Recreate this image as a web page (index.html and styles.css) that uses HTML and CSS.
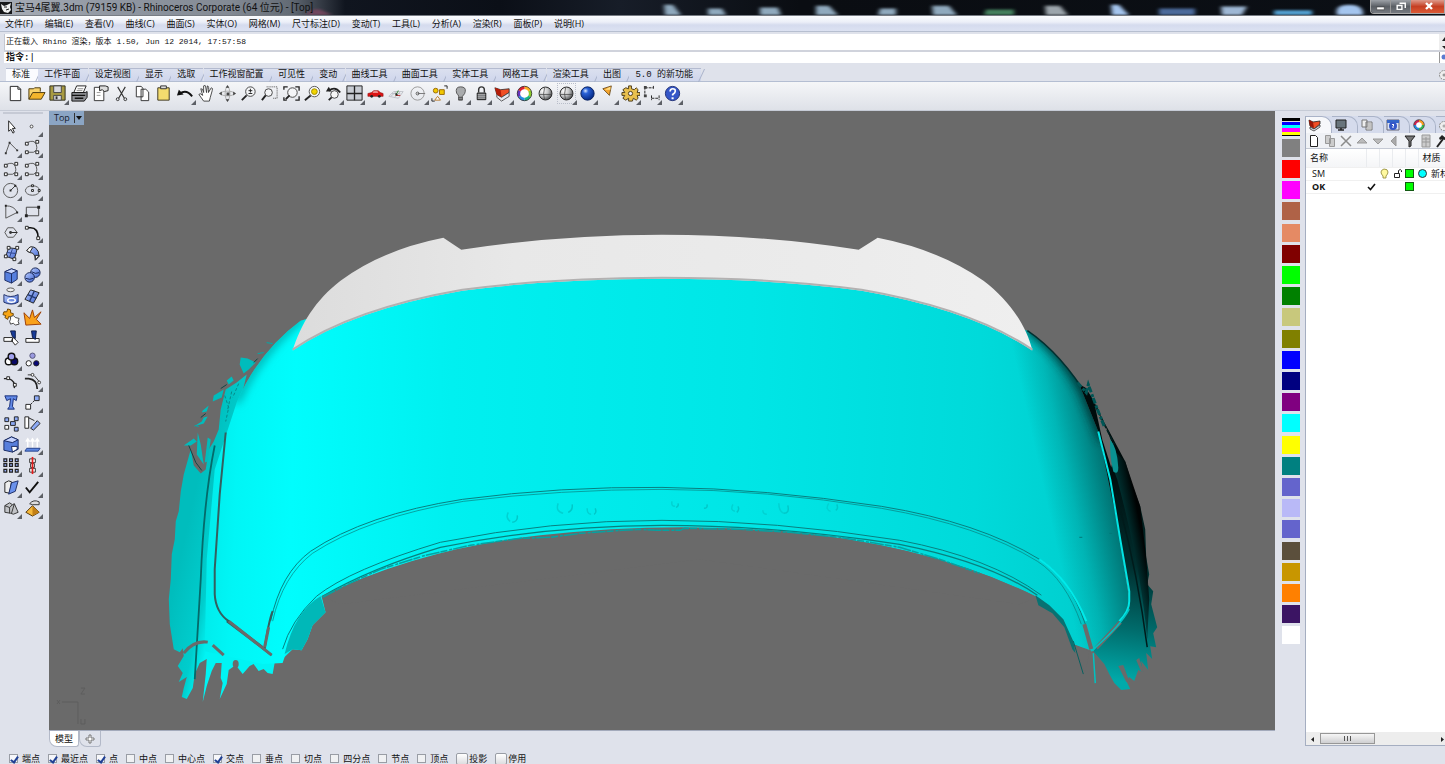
FILE: index.html
```html
<!DOCTYPE html>
<html>
   <head>
      <meta charset="UTF-8">
      <meta name="viewport" content="width=device-width, initial-scale=1.0">
      <title>宝马4尾翼.3dm - Rhinoceros Corporate</title>
      <link rel="stylesheet" href="styles.css">
   </head>
   <body>
      <header class="titlebar">
         <svg class="desktop" viewBox="0 0 1445 16" preserveAspectRatio="none" aria-hidden="true">
            <defs><filter id="soft"><feGaussianBlur stdDeviation="2 1"/></filter></defs>
            <g filter="url(#soft)">
               <path d="M664 5h9l8 11h-16zM708 9h14l4 7h-18zM760 8h18l3 8h-21zM816 6h13l9 10h-22zM880 9h16v7h-18zM932 6h17l8 10h-24z" fill="#8fa9bd"/>
               <path d="M986 10h28v6h-30z" fill="#45805d"/>
               <path d="M1045 6h15l8 10h-22z" fill="#9ca5ac"/>
               <path d="M1111 5h8l10 11h-17zM1337 16q-3-11 12-11t14 11z" fill="#a4c5ee"/>
               <path d="M1159 9h36v7h-36z" fill="#4c6b9b"/>
               <path d="M1221 7h26l-5 9h-20z" fill="#9eb7d4"/>
               <path d="M1274 11h38v5h-38z" fill="#52a0d1"/>
               <path d="M306 16q4-7 14-6l12 6z" fill="#71445b"/>
            </g>
         </svg>
         <svg class="app-icon" viewBox="0 0 12 12" aria-hidden="true">
            <path d="M0 0h12v12H0z" fill="#15171a"/>
            <path d="M1 2l3 2 3-1 4-2-1 4 1 3-3 3-4-1-2-3z" fill="#eef0f1"/>
            <path d="M4 5h3M6 8l3-1" stroke="#222"/>
         </svg>
         <h1>宝马4尾翼.3dm (79159 KB) - Rhinoceros Corporate (64 位元) - [Top]</h1>
         <div class="window-buttons">
            <button aria-label="Minimize"><svg viewBox="0 0 20 13"><path d="M6 7h8v3H6z" fill="#fff" stroke="#333" stroke-width=".6"/></svg></button>
            <button aria-label="Restore"><svg viewBox="0 0 20 13"><path d="M9 3h6v5M6.500 5.500h5v4h-5z" fill="none" stroke="#fff" stroke-width="1.500"/></svg></button>
            <button class="close" aria-label="Close"><svg viewBox="0 0 36 13"><path d="M15 3l6 6M21 3l-6 6" stroke="#fff" stroke-width="2.400"/></svg></button>
         </div>
      </header>

      <div class="menubar">
         <nav>
            <button>文件(F)</button><button>编辑(E)</button><button>查看(V)</button><button>曲线(C)</button><button>曲面(S)</button><button>实体(O)</button><button>网格(M)</button><button>尺寸标注(D)</button><button>变动(T)</button><button>工具(L)</button><button>分析(A)</button><button>渲染(R)</button><button>面板(P)</button><button>说明(H)</button>
         </nav>
      </div>

      <section class="command">
         <div class="history">
            <p>正在载入 Rhino 渲染，版本 1.50, Jun 12 2014, 17:57:58</p>
            <svg viewBox="0 0 6 16"><path d="M0 0h6v16H0z" fill="#eee"/><path d="M3 7l3-4v4zM3 12h3v3z" fill="#222"/></svg>
         </div>
         <div class="prompt">
            <label for="cmd">指令:</label>
            <input type="text" id="cmd" value="|">
            <svg viewBox="0 0 6 11"><path d="M.500 0v11" stroke="#999"/><circle cx="5" cy="5" r="2.500" fill="#5b7bd0"/></svg>
         </div>
      </section>

      <div class="tabrow">
         <nav class="tabs">
            <button class="active">标准</button><button>工作平面</button><button>设定视图</button><button>显示</button><button>选取</button><button>工作视窗配置</button><button>可见性</button><button>变动</button><button>曲线工具</button><button>曲面工具</button><button>实体工具</button><button>网格工具</button><button>渲染工具</button><button>出图</button><button>5.0 的新功能</button>
         </nav>
         <svg class="gear" viewBox="0 0 7 14"><circle cx="6" cy="7" r="4.500" fill="#eee" stroke="#888" stroke-dasharray="2 1"/><circle cx="6" cy="7" r="1.500" fill="#999"/></svg>
      </div>

      <div class="toolbar">
         <button aria-label="New"><svg viewBox="0 0 20 20"><path d="M4.500 2.500h8l3 3v12h-11z" fill="#fff" stroke="#222"/><path d="M12.500 2.500v3h3" fill="none" stroke="#222"/></svg></button>
         <button aria-label="Open"><svg viewBox="0 0 20 20"><path d="M2 16V5h5l1-1h6v4" fill="#f7d26a" stroke="#4b3a10"/><path d="M2 16l4-7h13l-4 7z" fill="#f3b52c" stroke="#4b3a10"/></svg></button>
         <button class="more" aria-label="Save"><svg viewBox="0 0 20 20"><path d="M2 2h16v15H2z" fill="#a89b43" stroke="#2e2d1a"/><path d="M6 2h8v7H6zM6 12h8v5H6z" fill="#d9dade" stroke="#444"/><path d="M8 13h2v3H8z" fill="#333"/></svg></button>
         <button aria-label="Print"><svg viewBox="0 0 20 20"><path d="M7 2h10l-3 7H4z" fill="#fff" stroke="#222"/><path d="M8 5h6M7 7h6" stroke="#888"/><path d="M2 9h14l2-1v6l-3 4H2z" fill="#8e9095" stroke="#111"/><path d="M2 12h14M5 15h9" stroke="#111" stroke-width="1.500"/></svg></button>
         <button aria-label="Properties"><svg viewBox="0 0 20 20"><path d="M3.500 3.500h10v14h-10z" fill="#fff" stroke="#333"/><path d="M6 9h4M6 12h4" stroke="#999"/><path d="M9 2h6l3 1v4l-4 1-2-2-3 1z" fill="#ddd" stroke="#222"/></svg></button>
         <button aria-label="Cut"><svg viewBox="0 0 20 20"><path d="M6 3l7 12M14 3L7 15" stroke="#333" stroke-width="1.200"/><circle cx="6" cy="16" r="1.500" fill="none" stroke="#333"/><circle cx="14" cy="16" r="1.500" fill="none" stroke="#333"/></svg></button>
         <button aria-label="Copy"><svg viewBox="0 0 20 20"><path d="M3.500 2.500h5l2 2v9h-7zM8.500 5.500h5l3 3v9h-8z" fill="#fff" stroke="#333"/></svg></button>
         <button aria-label="Paste"><svg viewBox="0 0 20 20"><path d="M4 4h12v13H4z" fill="#f4dc6e" stroke="#3c3620"/><path d="M7 2h6v3H7z" fill="#ddd" stroke="#333"/></svg></button>
         <button class="more" aria-label="Undo"><svg viewBox="0 0 20 20"><path d="M4 10q7-5 13 3" fill="none" stroke="#111" stroke-width="2"/><path d="M1 12l2-6 5 5z" fill="#111"/></svg></button>
         <button aria-label="Pan"><svg viewBox="0 0 20 20"><path d="M7 18l-5-7q1-2 4 1L4 5q2-1 3 4V2q2-1 2 0l1 7 1-7q2 0 1 7l3-5q2 0 1 3l-2 7-1 4z" fill="#fff" stroke="#333" stroke-width=".9"/></svg></button>
         <button aria-label="Rotate view"><svg viewBox="0 0 20 20"><ellipse cx="10" cy="10" rx="7" ry="2.500" fill="none" stroke="#aaa"/><ellipse cx="10" cy="10" rx="2.500" ry="7" fill="none" stroke="#aaa"/><path d="M10 1l2 3H8zM10 19l2-3H8zM1 10l3-2v4zM19 10l-3-2v4zM9 9h3v3H9z" fill="#444"/></svg></button>
         <button aria-label="Zoom dynamic"><svg viewBox="0 0 20 20"><circle cx="12" cy="8" r="5" fill="#f4f5f7" stroke="#444"/><path d="M3 17l5-5" stroke="#222" stroke-width="2"/><path d="M10 7h4M12 5v4M10 10h4" stroke="#222"/></svg></button>
         <button aria-label="Zoom window"><svg viewBox="0 0 20 20"><path d="M7 3h11v12h-5" fill="none" stroke="#444" stroke-dasharray="1 1"/><circle cx="9" cy="9" r="4" fill="#f4f5f7" stroke="#444"/><path d="M2 17l4-5" stroke="#222" stroke-width="2"/></svg></button>
         <button aria-label="Zoom extents"><svg viewBox="0 0 20 20"><circle cx="11" cy="9" r="5" fill="#f4f5f7" stroke="#444"/><path d="M4 16l4-4" stroke="#222" stroke-width="2"/><path d="M2 6V3h4M14 3h4v4M18 13v4h-4M2 14v3h3" fill="none" stroke="#222" stroke-width="1.400"/></svg></button>
         <button aria-label="Zoom selected"><svg viewBox="0 0 20 20"><circle cx="12" cy="8" r="5.500" fill="#f7f7f7" stroke="#555"/><circle cx="12" cy="8" r="3" fill="#f3d500" stroke="#9b8a00"/><path d="M2 17l6-5" stroke="#222" stroke-width="2"/></svg></button>
         <button class="more" aria-label="Undo view"><svg viewBox="0 0 20 20"><circle cx="11" cy="11" r="4" fill="#f6f6f6" stroke="#444"/><path d="M5 17l3-3" stroke="#222" stroke-width="1.800"/><path d="M5 7q7-5 12 2" fill="none" stroke="#222" stroke-width="2"/><path d="M2 8l3-5 3 5z" fill="#222"/></svg></button>
         <button class="more" aria-label="Four viewports"><svg viewBox="0 0 20 20"><path d="M2 2h16v15H2z" fill="#c8ccd3" stroke="#222"/><path d="M10 2v15M2 10h16" stroke="#222" stroke-width="1.400"/></svg></button>
         <button class="more" aria-label="Right view"><svg viewBox="0 0 20 20"><path d="M2 10l4-1 2-2h5l2 2 3 1v3H2z" fill="#dc1414" stroke="#8e0f0f" stroke-width=".6"/><path d="M8 8h4l1 1H7z" fill="#fff"/><circle cx="6" cy="13" r="1.500" fill="#222"/><circle cx="14" cy="13" r="1.500" fill="#222"/></svg></button>
         <button class="more" aria-label="Set CPlane"><svg viewBox="0 0 20 20"><path d="M2 13l5-5h10l-5 7zM5 10h9M4 13l7-6M8 14l6-6" fill="none" stroke="#b4b7be" stroke-width=".8"/><path d="M9 12l3-5" stroke="#2c8a2c"/><path d="M9 12h5" stroke="#b22"/><path d="M9 10l2 2" stroke="#222" stroke-width="1.500"/></svg></button>
         <button class="more" aria-label="Osnap"><svg viewBox="0 0 20 20"><circle cx="9" cy="10" r="7" fill="none" stroke="#999"/><path d="M9 10h8" stroke="#777"/><circle cx="9" cy="10" r="1.500" fill="none" stroke="#555"/></svg></button>
         <button class="more" aria-label="Select"><svg viewBox="0 0 20 20"><circle cx="6" cy="7" r="2.500" fill="#f2c800" stroke="#98690a"/><path d="M10 6h5v5h-5z" fill="#f2c800" stroke="#98690a"/><path d="M8 13l3 4H5z" fill="#fff" stroke="#b47728"/><path d="M2 15v3h3M15 2h3v3" fill="none" stroke="#222"/></svg></button>
         <button class="more" aria-label="Hide"><svg viewBox="0 0 20 20"><path d="M8 13q0-2-2-3-2-7 4-7t5 5q0 2-3 5v4H8z" fill="#a9abad" stroke="#555"/><path d="M8 14h4M8 16h4" stroke="#444"/></svg></button>
         <button class="more" aria-label="Lock"><svg viewBox="0 0 20 20"><path d="M7 9V6q0-3 3-3t3 3v3" fill="none" stroke="#333" stroke-width="1.500"/><path d="M5.500 9.500h9v7h-9z" fill="#77797d" stroke="#111"/><path d="M6 11h8M6 13h8M6 15h8" stroke="#bbb" stroke-width=".7"/></svg></button>
         <button class="more" aria-label="Layers"><svg viewBox="0 0 20 20"><path d="M2 4l6 2 9-1v4l-8 5-5-3z" fill="#f04e25" stroke="#222" stroke-width=".8"/><path d="M4 11l5 3 8-5v4l-8 5-5-4z" fill="#e5e7ee" stroke="#333" stroke-width=".8"/><path d="M2 4l6 2 1 8-5-3z" fill="#b41d08"/></svg></button>
         <button class="more" aria-label="Color wheel"><svg viewBox="0 0 20 20"><g fill="none" stroke-width="3.200"><path d="M10 4a6 6 0 0 1 5.200 3" stroke="#ffae1f"/><path d="M15.200 7a6 6 0 0 1 0 6" stroke="#8ccc2a"/><path d="M15.200 13a6 6 0 0 1-5.200 3" stroke="#18b786"/><path d="M10 16a6 6 0 0 1-5.200-3" stroke="#248be4"/><path d="M4.800 13a6 6 0 0 1 0-6" stroke="#6834bd"/><path d="M4.800 7A6 6 0 0 1 10 4" stroke="#df2030"/></g><circle cx="10" cy="10" r="7.600" fill="none" stroke="#222" stroke-width=".8"/><circle cx="10" cy="10" r="4.300" fill="#fff"/></svg></button>
         <button aria-label="Shade"><svg viewBox="0 0 20 20"><use href="#ball"/></svg></button>
         <button class="more pressed" aria-label="Shaded viewport"><svg viewBox="0 0 20 20"><use href="#ball"/></svg></button>
         <button class="more" aria-label="Render"><svg viewBox="0 0 20 20"><circle cx="10" cy="10" r="7" fill="url(#blueball)" stroke="#0a225f"/></svg></button>
         <button class="more" aria-label="Spotlight"><svg viewBox="0 0 20 20"><path d="M4 5l9-3-2 10z" fill="#f5a62f" stroke="#5a3a0a" stroke-width=".8"/><path d="M6 6l6-3v3z" fill="#ffe08a"/></svg></button>
         <button class="more" aria-label="Options"><svg viewBox="0 0 20 20"><path d="M8 2h3v3l3 1 2-2 2 2-1 3h3v3h-3l1 3-2 2-3-2-1 3H8v-3l-3 2-3-2 2-3H1V9h3L2 6l3-2 3 1z" fill="#e9c04e" stroke="#4b3a15"/><circle cx="10" cy="10" r="2.200" fill="#eef" stroke="#4b3a15"/></svg></button>
         <button class="more" aria-label="Dimension"><svg viewBox="0 0 20 20"><path d="M3 3v10M3 4h9M12 2v4M10 15h8M10 12v5M18 12v5" stroke="#222" fill="none" stroke-dasharray="3 1"/><path d="M2 2h3v3H2zM2 11h3v3H2z" fill="#444"/></svg></button>
         <button class="more" aria-label="Help"><svg viewBox="0 0 20 20"><circle cx="10" cy="10" r="7.500" fill="#3557c8" stroke="#1d2d74"/><path d="M7.500 8q0-3 2.800-3t2.600 2.500q0 1.500-2.700 3.500v1" fill="none" stroke="#fff" stroke-width="1.800"/><path d="M9 14h2.200v2H9z" fill="#fff"/></svg></button>
      </div>

      <svg class="defs" aria-hidden="true">
         <defs>
            <radialGradient id="greyball" cx=".3" cy=".3" r=".8"><stop offset="0" stop-color="#fff"/><stop offset=".5" stop-color="#c4c5c6"/><stop offset="1" stop-color="#444648"/></radialGradient>
            <radialGradient id="blueball" cx=".35" cy=".3" r=".7"><stop offset="0" stop-color="#d7e7ff"/><stop offset=".3" stop-color="#2a62d8"/><stop offset="1" stop-color="#062a86"/></radialGradient>
            <linearGradient id="blue" x2="1" y2="1"><stop offset="0" stop-color="#b9ccff"/><stop offset="1" stop-color="#3d63cf"/></linearGradient>
            <g id="ball"><circle cx="10" cy="10" r="6.800" fill="url(#greyball)" stroke="#222"/><path d="M9 4q-2 6 0 13M4 11h12" fill="none" stroke="#444" stroke-width=".8"/></g>
         </defs>
      </svg>

      <main>
         <aside class="tools">
            <button aria-label="Select"><svg viewBox="0 0 20 20"><path d="M7 4v11l2.500-2 2 4 1.500-1-2-4h3z" fill="#fff" stroke="#222"/></svg></button>
            <button class="more" aria-label="Point"><svg viewBox="0 0 20 20"><circle cx="9" cy="10" r="1.500" fill="#fff" stroke="#444"/></svg></button>
            <button class="more" aria-label="Polyline"><svg viewBox="0 0 20 20"><path d="M4 16l4-11 8 8" fill="none" stroke="#555"/><path d="M3 15h2v2H3zM7 4h2v2H7zM15 12h2v2h-2z" fill="#333"/></svg></button>
            <button class="more" aria-label="Curve"><svg viewBox="0 0 20 20"><use href="#curve"/></svg></button>
            <button class="more" aria-label="Interpolated curve"><svg viewBox="0 0 20 20"><use href="#curve"/></svg></button>
            <button class="more" aria-label="Handle curve"><svg viewBox="0 0 20 20"><use href="#curve"/></svg></button>
            <button class="more" aria-label="Circle"><svg viewBox="0 0 20 20"><circle cx="9" cy="10" r="7.500" fill="none" stroke="#555"/><path d="M9 10l5-5" stroke="#333"/><path d="M8 9h2v2H8zM13 4h2v2h-2z" fill="#222"/></svg></button>
            <button class="more" aria-label="Ellipse"><svg viewBox="0 0 20 20"><ellipse cx="10" cy="10" rx="7.500" ry="5" fill="none" stroke="#555"/><path d="M9 4h2v2H9zM9 9h2v2H9zM16 9h2v2h-2z" fill="#fff" stroke="#222"/></svg></button>
            <button class="more" aria-label="Arc"><svg viewBox="0 0 20 20"><path d="M4 17V4q9 0 12 7L4 17" fill="none" stroke="#555"/><path d="M3 3h2v2H3zM15 10h2v2h-2z" fill="#222"/></svg></button>
            <button class="more" aria-label="Rectangle"><svg viewBox="0 0 20 20"><path d="M3.500 5.500h13v9h-13z" fill="none" stroke="#444"/><path d="M2 13h3v3H2zM15 4h3v3h-3z" fill="#222"/></svg></button>
            <button class="more" aria-label="Polygon"><svg viewBox="0 0 20 20"><path d="M6 5h6l4 5-4 5H6l-3-5z" fill="none" stroke="#555"/><path d="M9 10h7" stroke="#222"/><circle cx="9" cy="10" r="1.500" fill="#333"/></svg></button>
            <button class="more" aria-label="Fillet"><svg viewBox="0 0 20 20"><path d="M3 5h5q8 0 8 11" fill="none" stroke="#111" stroke-width="1.800"/><path d="M2.500 3.500h3v3h-3zM14.500 14.500h3v3h-3z" fill="#fff" stroke="#222"/></svg></button>
            <button class="more" aria-label="Surface from points"><svg viewBox="0 0 20 20"><path d="M7 4l9 1-3 11-9-3z" fill="url(#blue)" stroke="#222"/><path d="M11 5L8 14M5 9l10 1" stroke="#2c438c"/><path d="M5.500 2.500h3v3h-3zM14.500 2.500h3v3h-3zM2.500 11.500h3v3h-3zM11.500 14.500h3v3h-3z" fill="#fff" stroke="#222"/></svg></button>
            <button class="more" aria-label="Surface"><svg viewBox="0 0 20 20"><path d="M4 7q4-6 9-3 4 3 4 9l-4 4q0-8-6-8z" fill="url(#blue)" stroke="#222"/><path d="M4 7q4-6 6-3L7 9zM17 12l-4 5v-5z" fill="#fff" stroke="#222"/></svg></button>
            <button class="more" aria-label="Box"><svg viewBox="0 0 20 20"><path d="M3 6l7-3 6 2v9l-6 4-7-3z" fill="#5780df" stroke="#1b2b63"/><path d="M3 6l7-3 6 2-6 3z" fill="#cad8ff" stroke="#1b2b63"/><path d="M10 8v10" stroke="#1b2b63"/></svg></button>
            <button class="more" aria-label="Boolean"><svg viewBox="0 0 20 20"><circle cx="13" cy="7" r="5" fill="url(#blue)" stroke="#14224f"/><circle cx="7" cy="12" r="5" fill="url(#blue)" stroke="#14224f"/><path d="M3 13q4 2 8 0M9 6q4 3 8 1" fill="none" stroke="#14224f"/></svg></button>
            <button class="more" aria-label="Project"><svg viewBox="0 0 20 20"><ellipse cx="9" cy="3" rx="4" ry="2" fill="#eee" stroke="#555"/><path d="M2 8q7 4 15 0v8q-7 4-15 0z" fill="url(#blue)" stroke="#1b2b63"/><ellipse cx="10" cy="14" rx="4" ry="2" fill="none" stroke="#fff" stroke-width="1.500"/></svg></button>
            <button class="more" aria-label="Mesh"><svg viewBox="0 0 20 20"><path d="M8 3l9 3-6 11-9-4z" fill="url(#blue)" stroke="#222"/><path d="M5 8l9 4M12 4L7 15" stroke="#21376f" stroke-width="1.500"/></svg></button>
            <button aria-label="Join"><svg viewBox="0 0 20 20"><path d="M2 4h3l1-3 3 1v3l3 1-1 4-4-1-1 3-3-2 1-2-3-1z" fill="#f7a515" stroke="#6a4202"/><path d="M9 9l3-1 2 2 4 1-1 3 1 3-4 1-2-2-3 1-1-3 1-2z" fill="#fff" stroke="#444"/></svg></button>
            <button aria-label="Explode"><svg viewBox="0 0 20 20"><path d="M3 18L1 5l6 6 3-9 2 8 7-6-5 8 5 5z" fill="#f9a11b" stroke="#9a3c05"/></svg></button>
            <button aria-label="Trim"><svg viewBox="0 0 20 20"><path d="M2 9h9v4H2zM12 9l5 5-3 3-4-5z" fill="#fff" stroke="#222"/><path d="M9 2h5v8l-3-2z" fill="#173b99" stroke="#0d1a46"/></svg></button>
            <button aria-label="Split"><svg viewBox="0 0 20 20"><path d="M3 10h14v4H3z" fill="#fff" stroke="#222"/><path d="M9 2h5l-1 9-3-2z" fill="#173b99" stroke="#0d1a46"/></svg></button>
            <button class="more" aria-label="Group"><svg viewBox="0 0 20 20"><circle cx="7" cy="12" r="3.500" fill="#fff" stroke="#111" stroke-width="1.500"/><circle cx="13" cy="12" r="3.500" fill="#080865" stroke="#111" stroke-width="1.500"/><circle cx="10" cy="7" r="3.500" fill="#a2a2ef" stroke="#111" stroke-width="1.500"/></svg></button>
            <button aria-label="Ungroup"><svg viewBox="0 0 20 20"><circle cx="10" cy="6" r="2.800" fill="#9999e0" stroke="#557"/><circle cx="6" cy="14" r="2.800" fill="#fff" stroke="#222"/><circle cx="14" cy="14" r="2.800" fill="#080878" stroke="#222"/></svg></button>
            <button aria-label="Edit points"><svg viewBox="0 0 20 20"><path d="M2 7h5q7 2 6 10" fill="none" stroke="#222" stroke-width="1.500"/><path d="M5 5h3v3H5zM12 12h3v3h-3z" fill="#fff" stroke="#222"/></svg></button>
            <button class="more" aria-label="Control points"><svg viewBox="0 0 20 20"><path d="M2 7h4q9 1 9 11" fill="none" stroke="#222" stroke-width="1.800"/><path d="M5 3h5M12 4l5 6" stroke="#333"/><circle cx="10" cy="3" r="1.500" fill="#fff" stroke="#333"/><circle cx="17" cy="11" r="1.500" fill="#fff" stroke="#333"/></svg></button>
            <button aria-label="Text"><svg viewBox="0 0 20 20"><path d="M3 3h13l-1 5-3-2-1 8 2 3H6l2-3 1-8-4 2z" fill="#6289e7" stroke="#162c76"/></svg></button>
            <button class="more" aria-label="Move"><svg viewBox="0 0 20 20"><path d="M12 3h5v5h-5z" fill="#8daaf6" stroke="#222"/><path d="M3 12h5v5H3z" fill="#fff" stroke="#222"/><path d="M8 12l4-4" stroke="#222" stroke-dasharray="2 1"/></svg></button>
            <button aria-label="Copy objects"><svg viewBox="0 0 20 20"><path d="M3 4h4v4H3zM13 3h4v4h-4zM9 8h5v4H9zM13 14h4v4h-4z" fill="#8daaf6" stroke="#222"/><path d="M3 12h4v4H3z" fill="#fff" stroke="#222"/></svg></button>
            <button aria-label="Rotate"><svg viewBox="0 0 20 20"><path d="M2 3h4v12H2z" fill="#fff" stroke="#222"/><path d="M8 15l7-8 3 3-7 7z" fill="#8daaf6" stroke="#222"/><path d="M6 4l6 3" stroke="#222"/></svg></button>
            <button class="more" aria-label="Solid edit"><svg viewBox="0 0 20 20"><path d="M2 6l8-4 7 3v10l-6 3-9-2z" fill="#587fdc" stroke="#17285f"/><path d="M2 6l8-4 7 3-6 3z" fill="#c5d3ff" stroke="#17285f"/><path d="M10 12h6v3l-5 3z" fill="#fff" stroke="#17285f"/></svg></button>
            <button class="more" aria-label="Flow"><svg viewBox="0 0 20 20"><path d="M2 17l2-3h14l-2 3z" fill="#5c87e3" stroke="#26428c"/><path d="M5 13V5M10 13V5M15 13V5M3 7l2-3 2 3M8 7l2-3 2 3M13 7l2-3 2 3" fill="none" stroke="#fff" stroke-width="1.500"/></svg></button>
            <button class="more" aria-label="Array"><svg viewBox="0 0 20 20"><path d="M2 3h3v3H2zM8 3h3v3H8zM14 3h3v3h-3zM2 8h3v3H2zM8 8h3v3H8zM14 8h3v3h-3zM2 14h3v3H2zM8 14h3v3H8zM14 14h3v3h-3z" fill="#9cb4ff" stroke="#222" stroke-width="1.300"/></svg></button>
            <button class="more" aria-label="Align"><svg viewBox="0 0 20 20"><path d="M7 3h6v4H7zM8 8h4v4H8zM7 13h6v4H7z" fill="#fff" stroke="#333"/><path d="M10 1v18" stroke="#e31b1b" stroke-width="1.800"/></svg></button>
            <button class="more" aria-label="Unroll"><svg viewBox="0 0 20 20"><path d="M3 5l4-2 3 1-2 12-5-1z" fill="#eee" stroke="#222"/><path d="M10 5l7-2-3 11-7 3z" fill="#6a91ec" stroke="#1c2c63"/></svg></button>
            <button class="more" aria-label="Check"><svg viewBox="0 0 20 20"><path d="M3 10l4 5 9-11" fill="none" stroke="#111" stroke-width="2"/></svg></button>
            <button class="more" aria-label="Primitives"><svg viewBox="0 0 20 20"><path d="M3 7l5-3 3 2 2-1 4 9-5 2-3-1-6-1z" fill="#c1c3c7" stroke="#333"/><path d="M3 7l5 2 3-3M8 9v6M13 5l-3 10" fill="none" stroke="#333"/></svg></button>
            <button class="more" aria-label="Pyramid"><svg viewBox="0 0 20 20"><path d="M3 14l7-7 7 7-7 4z" fill="#f5b83a" stroke="#4e3206"/><path d="M10 7v11l7-4z" fill="#c27f15"/><path d="M7 5q4-5 10-2v3h-7z" fill="#ddd" stroke="#333"/></svg></button>
            <svg class="defs"><g id="curve"><path d="M4 5q8-4 10 2t-3 8H5" fill="none" stroke="#555"/><path d="M2.500 4.500h3v3h-3zM13.500 2.500h3v3h-3zM2.500 13.500h3v3h-3zM13.500 13.500h3v3h-3z" fill="#fff" stroke="#222"/></g></svg>
         </aside>

         <section class="workspace">
            <div class="viewport">
               <svg class="scene" viewBox="49 111 1226 620" role="img" aria-label="Top viewport">
                  <defs>
                     <linearGradient id="body" gradientUnits="userSpaceOnUse" x1="205" y1="0" x2="1130" y2="30">
                        <stop offset="0" stop-color="#00e6e6"/><stop offset=".05" stop-color="#00f6f6"/><stop offset=".11" stop-color="#00fdfd"/>
                        <stop offset=".28" stop-color="#00f0f0"/><stop offset=".6" stop-color="#00e6e6"/><stop offset=".85" stop-color="#00dada"/><stop offset="1" stop-color="#00cccc"/>
                     </linearGradient>
                     <linearGradient id="leftFender" gradientUnits="userSpaceOnUse" x1="170" y1="600" x2="215" y2="610">
                        <stop offset="0" stop-color="#00bdbd"/><stop offset=".7" stop-color="#00cdcd"/><stop offset="1" stop-color="#00f4f4"/>
                     </linearGradient>
                     <linearGradient id="rightShade" gradientUnits="userSpaceOnUse" x1="1040" y1="470" x2="1112" y2="454">
                        <stop offset="0" stop-color="#002828" stop-opacity="0"/><stop offset=".35" stop-color="#002828" stop-opacity=".16"/><stop offset="1" stop-color="#002020" stop-opacity=".6"/>
                     </linearGradient>
                     <linearGradient id="rightFender" gradientUnits="userSpaceOnUse" x1="1135" y1="470" x2="1105" y2="680">
                        <stop offset="0" stop-color="#000c0c"/><stop offset=".45" stop-color="#002e2e"/><stop offset=".75" stop-color="#006c6c"/><stop offset="1" stop-color="#00aaaa"/>
                     </linearGradient>
                     <linearGradient id="fenderEdge" gradientUnits="userSpaceOnUse" x1="1118" y1="580" x2="1150" y2="574">
                        <stop offset="0" stop-color="#008080" stop-opacity=".6"/><stop offset="1" stop-color="#000" stop-opacity=".9"/>
                     </linearGradient>
                     <linearGradient id="wing" x2="1"><stop offset="0" stop-color="#dcdcdc"/><stop offset=".3" stop-color="#e8e8e8"/><stop offset=".7" stop-color="#ebebeb"/><stop offset="1" stop-color="#efefef"/></linearGradient>
                     <filter id="blur6" x="-30%" y="-30%" width="160%" height="160%"><feGaussianBlur stdDeviation="5"/></filter>
                     <clipPath id="hull"><path d="M300 321Q258 352 236 403L214 470 206 560 204 652 262 665 282 664 290 640 300 615 321 597Q420 549 540 536Q662 522 782 532Q930 545 1038 598Q1062 614 1074 645L1094 652Q1132 622 1130 600L1118 525 1099 432 1080 385Q1060 354 1028 331Q850 270 662 270T300 321z"/></clipPath>
                  </defs>
                  <!-- left fender and torn scan edges -->
                  <path d="M246 375L236 383 225 390 220 410 218 430 213 442 208 450 205 470 200 474 193 466 190 450 183 475 180 492 178 512 175 522 174 540 171 555 170 580 168 600 169 625 173 650 179 653 182 649 183 657 177 667 182 674 178 683 186 678 183 689 181 698 186 700 192 689 194 675 199 664 206 660 205 675 202 703 206 687 211 672 215 664 221 664 220 679 222 684 219 700 226 685 228 671 235 666 242 675 249 667 253 665 258 672 263 670 267 674 272 675 274 664 284 658 292 650 301 651 307 640 312 626 318 620 325 613 321 597 260 570 240 400z" fill="url(#leftFender)"/>
                  <path d="M240 358l7 1 8 4-7 7-5 4-4-9zM226 381l5-4 2 4-5 4zM213 396l10-6-2 8-9 4zM202 411l6-5-2 6-5 1zM193 427l8-5 2-4 4-1-4 7zM183 446l10-7 3 3-6 4zM197 433l3 12 3 20-7-10zM207 438l3 2-3 22-3 1z" fill="#00bcbc"/>
                  <path d="M253 363l4-4M220 389l6-4M200 418l5-4M188 446l7 17 6 8" stroke="#144" fill="none"/>
                  <path d="M224 396l4 12-3 14M231 392l-4 18M238 384l-6 14" stroke="#078a8a" stroke-dasharray="3 2" fill="none"/>
                  <path d="M266 343l6 1M257 354l6-1M194 426l4 1" stroke="#0aa"/>
                  <path d="M214 446Q203 500 200 580L194 680" fill="none" stroke="#046a6a" stroke-width="1.800"/>

                  <!-- main hull -->
                  <path d="M300 321Q258 352 236 403L214 470 206 560 204 652 262 665 282 664 290 640 300 615 321 597Q420 549 540 536Q662 522 782 532Q930 545 1038 598Q1062 614 1074 645L1094 652Q1132 622 1130 600L1118 525 1099 432 1080 385Q1060 354 1028 331Q850 270 662 270T300 321z" fill="url(#body)"/>
                  <g clip-path="url(#hull)">
                     <path d="M980 320L1050 660H1140V320z" fill="url(#rightShade)"/>
                     <path d="M1030 327Q1064 350 1086 390L1107 440" fill="none" stroke="#002b2b" stroke-width="14" filter="url(#blur6)" opacity=".8"/>
                     <path d="M302 318Q258 352 235 403" fill="none" stroke="#009a9a" stroke-width="6" filter="url(#blur6)"/>
                  </g>
                  <path d="M1028 331Q1062 354 1090 400" fill="none" stroke="#013030" stroke-width="1.500"/>

                  <!-- seams -->
                  <g fill="none" stroke="#08807f">
                     <path d="M270 622Q280 574 310 552Q365 515 462 500Q560 487 662 488T882 507Q980 523 1040 560Q1070 578 1086 625"/>
                     <path d="M272 622Q282 577 312 554Q367 518 463 502Q560 490 662 490T882 509Q980 526 1038 562Q1066 580 1082 625" stroke-width=".7"/>
                     <path d="M282 650Q290 622 316 597Q350 570 440 543Q550 521 662 521T900 541Q990 558 1042 596" />
                     <path d="M322 597Q370 569 440 548Q550 526 662 526T900 545Q990 563 1038 596" stroke-width="1.300"/>
                  </g>
                  <g fill="none" stroke="#00d2d2" stroke-width="1.500">
                     <path d="M508 513q-3 6 2 9M558 504q-3 8 5 10M587 509q0 6 4 6M672 502q-1 5 3 5M733 505q-3 6 2 7M763 511q0 4 4 4M779 504q0 8 5 10M829 504q-4 6 2 8"/>
                     <path d="M512 523q6-1 5-7M568 513q5-2 4-8M594 515q3-2 1-6M676 508q3-1 2-4M704 509q4 0 3-4M737 513q3-3 1-6M784 514q6 0 4-8M836 511q3-2 1-6" stroke="#00c8c8"/>
                  </g>
                  <!-- open gaps -->
                  <path d="M225 433L219 495 214 570 214 595Q215 613 228 622L262 648M264 650Q268 622 272 612M226 622L271 656" fill="none" stroke="#345f5f" stroke-width="2"/>
                  <path d="M228 622L271 656M264 648L268 628" fill="none" stroke="#6a6a6a" stroke-width="3"/>
                  <path d="M183 654Q193 641 207 643M212 646L223 656" fill="none" stroke="#6a6a6a" stroke-width="3"/>
                  <ellipse cx="235" cy="665" rx="3" ry="4" fill="#6a6a6a"/>
                  <path d="M320 597Q294 612 284 655L292 650 301 651 307 640 312 626 325 613z" fill="#00b8b8"/>
                  <path d="M321 597Q422 550 540 537Q662 525 782 532Q930 545 1038 598L1020 605 700 560 340 605z" fill="#6a6a6a"/>
                  <path d="M322 598L345 586 380 570 425 556 470 546 520 539 550 538 580 534 622 531 640 530 657 531 680 531 685 529 740 530 790 533 840 538 900 548 940 560 980 574" fill="none" stroke="#05a2a2" stroke-width="1.500" stroke-dasharray="14 1 7 2 3 1"/>

                  <!-- right fender -->
                  <path d="M1080 385L1086 388 1092 397 1100 414 1110 432 1118 447 1126 462 1133 485 1141 507 1146 530 1147 558 1150 575 1148 585 1154 592 1152 605 1158 628 1154 634 1157 648 1151 647 1153 660 1147 654 1149 671 1142 662 1143 673 1139 671 1135 682 1130 678 1127 682 1131 690 1122 691 1115 684 1110 675 1105 665 1094 652 1130 610 1130 596 1118 525 1099 432z" fill="url(#rightFender)"/>
                  <path d="M1103 440L1126 462 1141 507 1147 558 1150 600 1148 640Q1142 570 1118 480z" fill="url(#fenderEdge)"/>
                  <path d="M1117 495Q1138 570 1148 648" fill="none" stroke="#001b1b" stroke-width="1.500"/>
                  <path d="M1119 667l8 16 3-1-6-16zM1137 661l5 12 2-1-4-13z" fill="#6a6a6a"/>
                  <path d="M1096 408L1106 426 1116 452 1112 468 1103 440z" fill="#6a6a6a"/>
                  <path d="M1111 440q7 8 8 28 0 8-5 4-4-16-3-32z" fill="#0a9292"/>
                  <path d="M1096 405l9 20 10 20" fill="none" stroke="#022" stroke-width="1.500" stroke-dasharray="5 2"/>
                  <path d="M1078 383l9 10 2-8 8 22 8 20" fill="none" stroke="#055" stroke-width="3" stroke-dasharray="6 2 3 1"/>
                  <path d="M1099 432L1111 480 1121 540 1130 592V602Q1130 612 1120 622" fill="none" stroke="#00e5e5" stroke-width="2"/>
                  <path d="M1097 649L1121 623" stroke="#6a6a6a" stroke-width="4"/>
                  <path d="M1085 625L1092 650" stroke="#6a6a6a" stroke-width="4"/>
                  <path d="M1040 560Q1070 580 1087 622" fill="none" stroke="#00eaea" stroke-width="2"/>
                  <path d="M1094 654l2 30M1092 652Q1122 626 1130 610" fill="none" stroke="#00c2c2" stroke-width="1.500"/>
                  <path d="M1074 645L1090 652 1086 675z" fill="#6a6a6a"/>
                  <path d="M1036 596l3 10 14 8 12 14 8 22 3 4-2-12-10-22-14-14z" fill="#087272"/>
                  <path d="M1074 642l10 33" stroke="#085f5f"/>
                  <path d="M1080 538h3M1110 534h3" stroke="#077"/>

                  <!-- spoiler -->
                  <path d="M292 351C300 325 315 300 340 281Q382 250 443 238L461 250Q560 235 662 235T859 250L878 238Q940 250 984 281C1009 300 1027 325 1033 351Q972 310 862 291Q770 279 662 279T462 291Q352 310 292 351z" fill="url(#wing)"/>
                  <path d="M292 350Q352 309 462 290Q554 278 662 278T862 290Q972 309 1033 350" fill="none" stroke="#b3b1b1" stroke-width="2"/>
                  <!-- world axes -->
                  <path d="M61 703h16v22" fill="none" stroke="#5d5d5d"/>
                  <path d="M56 701l3 4M59 701l-3 4M80 689h4l-4 6h4M80 720v5h4v-5" fill="none" stroke="#5d5d5d"/>
               </svg>
               <button class="view-title">Top<span></span></button>
            </div>
            <nav class="page-tabs">
               <button class="active">模型</button>
               <button aria-label="Add layout"><svg viewBox="0 0 10 10"><path d="M4 1h2v3h3v2H6v3H4V6H1V4h3z" fill="#fff" stroke="#777"/></svg></button>
            </nav>
         </section>

         <aside class="palette">
            <button class="c-stripes" aria-label="Color sets"></button>
            <button class="c-grey" aria-label="Grey"></button>
            <button class="c-red" aria-label="Red"></button>
            <button class="c-magenta" aria-label="Magenta"></button>
            <button class="c-brown" aria-label="Brown"></button>
            <button class="c-salmon" aria-label="Salmon"></button>
            <button class="c-maroon" aria-label="Maroon"></button>
            <button class="c-lime" aria-label="Lime"></button>
            <button class="c-green" aria-label="Green"></button>
            <button class="c-khaki" aria-label="Khaki"></button>
            <button class="c-olive" aria-label="Olive"></button>
            <button class="c-blue" aria-label="Blue"></button>
            <button class="c-navy" aria-label="Navy"></button>
            <button class="c-purple" aria-label="Purple"></button>
            <button class="c-cyan" aria-label="Cyan"></button>
            <button class="c-yellow" aria-label="Yellow"></button>
            <button class="c-teal" aria-label="Teal"></button>
            <button class="c-slate" aria-label="Slate"></button>
            <button class="c-lilac" aria-label="Lilac"></button>
            <button class="c-slate" aria-label="Slate"></button>
            <button class="c-umber" aria-label="Umber"></button>
            <button class="c-gold" aria-label="Gold"></button>
            <button class="c-orange" aria-label="Orange"></button>
            <button class="c-violet" aria-label="Violet"></button>
            <button class="c-white" aria-label="White"></button>
         </aside>

         <aside class="panel">
            <nav class="panel-tabs">
               <button class="active" aria-label="Layers"><svg viewBox="0 0 14 14"><path d="M1 2l4 2 7-1v3l-6 5-4-3z" fill="#f04e25" stroke="#222" stroke-width=".8"/><path d="M2 9l4 2 6-4v2l-6 4-4-2z" fill="#e5e7ee" stroke="#333" stroke-width=".8"/><path d="M1 2l4 2 1 6-4-2z" fill="#9b1707"/></svg></button>
               <button aria-label="Display"><svg viewBox="0 0 14 14"><path d="M2 2h10v8H2z" fill="#68747c" stroke="#222"/><path d="M4 12h6M7 10v2" stroke="#222" stroke-width="1.500"/></svg></button>
               <button aria-label="Properties"><svg viewBox="0 0 14 14"><path d="M2 2h5v7H2zM6 4h6v8H6z" fill="#eee" stroke="#777"/><path d="M7 6h4M7 8h4M7 10h4" stroke="#999"/></svg></button>
               <button aria-label="Help"><svg viewBox="0 0 14 14"><path d="M1 2h12v10H1z" fill="#d9e3f7" stroke="#667"/><path d="M1 2h12v3H1z" fill="#3465c9"/><circle cx="7" cy="8" r="4" fill="#3557c8"/><path d="M6 7q1-2 2 0L7 8v2" fill="none" stroke="#fff"/></svg></button>
               <button aria-label="Materials"><svg viewBox="0 0 14 14"><g fill="none" stroke-width="2.500"><path d="M7 3a4 4 0 0 1 4 4" stroke="#ff9e1f"/><path d="M11 7a4 4 0 0 1-4 4" stroke="#36bb55"/><path d="M7 11a4 4 0 0 1-4-4" stroke="#248be4"/><path d="M3 7a4 4 0 0 1 4-4" stroke="#cf2050"/></g><circle cx="7" cy="7" r="5.300" fill="none" stroke="#333" stroke-width=".7"/><circle cx="7" cy="7" r="2.600" fill="#fff"/></svg></button>
               <button aria-label="Panel options"><svg viewBox="0 0 14 14"><circle cx="6" cy="8" r="4.500" fill="#eee" stroke="#888" stroke-dasharray="2 1"/><circle cx="6" cy="8" r="1.500" fill="#aaa"/></svg></button>
            </nav>
            <div class="panel-tools">
               <button aria-label="New layer"><svg viewBox="0 0 14 14"><path d="M3.500 1.500h5l2 2v9h-7z" fill="#fff" stroke="#222"/></svg></button>
               <button aria-label="New sublayer"><svg viewBox="0 0 14 14"><path d="M2.500 1.500h5v8h-5zM6.500 4.500h5v8h-5z" fill="#ccc" stroke="#999"/></svg></button>
               <button aria-label="Delete"><svg viewBox="0 0 14 14"><path d="M2 2l10 10M12 2L2 12" stroke="#8b8b8b" stroke-width="1.500"/></svg></button>
               <button aria-label="Up"><svg viewBox="0 0 14 14"><path d="M7 4l5 5H2z" fill="#bbb" stroke="#999"/></svg></button>
               <button aria-label="Down"><svg viewBox="0 0 14 14"><path d="M7 10l5-5H2z" fill="#bbb" stroke="#999"/></svg></button>
               <button aria-label="Left"><svg viewBox="0 0 14 14"><path d="M4 7l5-5v10z" fill="#aaa" stroke="#999"/></svg></button>
               <button aria-label="Filter"><svg viewBox="0 0 14 14"><path d="M2 2h10L8 7v5l-2 1V7z" fill="#777" stroke="#222"/></svg></button>
               <button aria-label="Report"><svg viewBox="0 0 14 14"><path d="M3 1h8v12H3zM3 5h8M3 8h8M7 3v10" fill="#ccc" stroke="#999"/></svg></button>
               <button aria-label="Tools"><svg viewBox="0 0 14 14"><path d="M4 4l3-3 5 4-2 1-3-1-2 1z" fill="#222"/><path d="M8 5l-6 8" stroke="#222" stroke-width="2"/></svg></button>
            </div>
            <table class="layers">
               <thead>
                  <tr><th class="name">名称</th><th></th><th></th><th></th><th></th><th class="material">材质</th></tr>
               </thead>
               <tbody>
                  <tr>
                     <td class="name">SM</td>
                     <td></td>
                     <td><svg viewBox="0 0 11 11"><path d="M4 8Q2 6 2 4t3-3q4 0 4 3 0 2-2 4v2H4z" fill="#fff9a0" stroke="#8b8430" stroke-width=".8"/></svg></td>
                     <td><svg viewBox="0 0 11 11"><path d="M2.500 5.500h5v4h-5zM6.500 5V2.500q2-2 3 0V4" fill="#fff" stroke="#222"/></svg></td>
                     <td><i class="layer-color"></i></td>
                     <td class="material"><i class="layer-material"></i>新材</td>
                  </tr>
                  <tr class="current">
                     <td class="name">OK</td>
                     <td><svg viewBox="0 0 11 11"><path d="M2 6l2.500 2.500L9 3" fill="none" stroke="#111" stroke-width="1.600"/></svg></td>
                     <td></td>
                     <td></td>
                     <td><i class="layer-color"></i></td>
                     <td></td>
                  </tr>
               </tbody>
            </table>
            <div class="hscroll">
               <svg viewBox="0 0 12 12"><path d="M8 4v5L5 6.500z" fill="#222"/></svg>
               <div class="thumb"></div>
               <svg class="end" viewBox="0 0 12 12"><path d="M8 4v5l3-2.500z" fill="#222"/></svg>
            </div>
         </aside>
      </main>

      <footer class="osnap">
         <label><input type="checkbox" checked>端点</label>
         <label><input type="checkbox" checked>最近点</label>
         <label><input type="checkbox" checked>点</label>
         <label><input type="checkbox">中点</label>
         <label><input type="checkbox">中心点</label>
         <label><input type="checkbox" checked>交点</label>
         <label><input type="checkbox">垂点</label>
         <label><input type="checkbox">切点</label>
         <label><input type="checkbox">四分点</label>
         <label><input type="checkbox">节点</label>
         <label><input type="checkbox">顶点</label>
         <label><input type="checkbox" class="wide">投影</label>
         <label><input type="checkbox" class="wide">停用</label>
      </footer>
   </body>
</html>
```
FILE: styles.css
```css
* {
box-sizing: border-box;
}
body {
margin: 0;
height: 100vh;
display: flex;
flex-direction: column;
overflow: hidden;
background: #dfe2eb;
color: #111;
font-family: "Open Sans", "Noto Sans CJK SC", sans-serif;
font-size: 9px;
line-height: 12px;
}
button {
margin: 0;
padding: 0;
border: none;
background: none;
color: inherit;
font: inherit;
white-space: nowrap;
}
svg {
display: block;
flex: none;
}
.defs {
position: absolute;
width: 0;
height: 0;
}

/* title bar */
.titlebar {
position: relative;
flex: none;
height: 16px;
display: flex;
align-items: center;
gap: 3px;
background: linear-gradient(90deg, #a7adb7 0, #8f96a1 120px, #838a94 230px, #636b75 290px, #10151f 345px, #0b0f17 500px, #171d28 620px, #0a0d12 800px, #0b0f15 100%);
border-bottom: 1px solid #777c84;
}
.desktop {
position: absolute;
left: 0;
top: 0;
width: 100%;
height: 15px;
}
.app-icon {
position: relative;
width: 12px;
height: 12px;
}
.titlebar h1 {
position: relative;
flex: 1;
margin: 0;
font-family: Roboto, "Noto Sans CJK SC", sans-serif;
font-size: 10px;
font-weight: normal;
line-height: 14px;
}
.window-buttons {
position: relative;
align-self: flex-start;
display: flex;
height: 14px;
border: 1px solid #aaa;
border-top: none;
border-radius: 0 0 0 4px;
overflow: hidden;
}
.window-buttons button {
width: 20px;
border-right: 1px solid #999;
background: linear-gradient(#9da1a7, #5b5f65 50%, #777b81);
}
.window-buttons svg {
width: 19px;
height: 13px;
}
.window-buttons .close {
width: 33px;
border-right: none;
background: linear-gradient(#dd9a8b, #c53f23 50%, #dc5a35);
}
.window-buttons .close svg {
width: 36px;
}

/* menu */
.menubar {
flex: none;
height: 16px;
background: linear-gradient(#fbfcfe, #eceff8 40%, #d5dbee 60%, #dce2f2);
border-bottom: 1px solid #b7bfd0;
}
.menubar nav {
display: flex;
justify-content: space-between;
width: 589px;
}
.menubar button {
padding: 0 5px;
line-height: 15px;
}

/* command line */
.command {
flex: none;
padding: 2px 0 5px 4px;
}
.history,
.prompt {
display: flex;
align-items: center;
background: #fff;
font-family: "Liberation Mono", "Noto Sans CJK SC", monospace;
}
.history {
height: 16px;
border-left: 1px solid #c3c7d2;
}
.history p {
flex: 1;
margin: 0;
padding-left: 1px;
font-size: 8px;
line-height: 12px;
}
.history svg {
width: 6px;
height: 16px;
}
.prompt {
height: 13px;
border-top: 2px solid #d0d3dc;
}
.prompt label {
padding-left: 2px;
font-weight: bold;
}
.prompt input {
flex: 1;
height: 11px;
padding: 0;
border: none;
outline: none;
background: none;
font: inherit;
}
.prompt svg {
width: 6px;
height: 11px;
}

/* toolbar tabs */
.tabrow {
flex: none;
display: flex;
justify-content: space-between;
height: 14px;
padding-left: 6px;
border-bottom: 1px solid #b4bed2;
}
.tabs {
display: flex;
justify-content: space-between;
width: 695px;
font-family: "Liberation Mono", "Noto Sans CJK SC", monospace;
}
.tabs button {
position: relative;
height: 13px;
padding: 0 8px 0 6px;
border-top: 1px solid #b4bbd0;
background: linear-gradient(#dbe0ef, #cfd6ec);
line-height: 13px;
}
.tabs button::after {
content: "";
position: absolute;
top: 0;
right: -1px;
width: 1px;
height: 13px;
background: #a9b2ca;
transform: skewX(-25deg);
}
.tabs .active {
background: #fafbfe;
}
.gear {
width: 7px;
height: 14px;
}

.toolbar {
flex: none;
display: grid;
grid-template-columns: repeat(32, 1fr);
width: 678px;
height: 29px;
padding-bottom: 6px;
margin-left: 5px;
}
.toolbar::before {
content: "";
position: absolute;
z-index: -1;
left: 0;
right: 0;
height: 28px;
background: linear-gradient(#f5f6f8, #dee1e8);
border-bottom: 1px solid #c6cbd6;
}
.toolbar button,
.tools button {
position: relative;
display: flex;
align-items: center;
justify-content: center;
}
.toolbar svg {
width: 19px;
height: 19px;
}
.more::after {
content: "";
position: absolute;
right: 0;
bottom: 0;
border-left: 5px solid transparent;
border-bottom: 5px solid #5d6066;
}
.pressed {
outline: 1px dotted #b8bdc9;
outline-offset: -2px;
}

/* main area */
main {
flex: 1;
min-height: 0;
display: flex;
}
.tools {
position: relative;
flex: none;
width: 49px;
height: 408px;
padding: 5px 6px 0 1px;
display: grid;
grid-template-columns: 1fr 1fr;
grid-template-rows: repeat(19, 1fr);
}
.tools::before {
content: "";
position: absolute;
left: 3px;
right: 6px;
top: 1px;
height: 2px;
background: #c6cad5;
}
.tools button > svg {
width: 19px;
height: 19px;
}
.workspace {
flex: 1;
min-width: 0;
display: flex;
flex-direction: column;
}
.viewport {
position: relative;
flex: 1;
min-height: 0;
background: #6a6a6a;
border-bottom: 1px solid #a3aabb;
}
.scene {
width: 100%;
height: 100%;
}
.view-title {
position: absolute;
left: 0;
top: 0;
display: flex;
align-items: center;
gap: 4px;
height: 14px;
padding: 0 2px 0 5px;
background: #8ba5c4;
color: #16202e;
}
.view-title span {
height: 10px;
padding-left: 1px;
border-left: 1px solid #333;
}
.view-title span::after {
content: "";
display: block;
margin-top: 3px;
border: 3px solid transparent;
border-top: 4px solid #111;
}
.page-tabs {
flex: none;
display: flex;
height: 17px;
}
.page-tabs button {
height: 16px;
width: 22px;
display: flex;
align-items: center;
justify-content: center;
border: 1px solid #b3b9c8;
border-top: none;
border-radius: 0 0 3px 8px;
}
.page-tabs .active {
width: 30px;
background: #fff;
}
.page-tabs svg {
width: 10px;
height: 10px;
}

/* colour palette */
.palette {
flex: none;
width: 31px;
height: 535px;
padding: 5px 6px 0 7px;
display: grid;
grid-template-rows: repeat(25, 1fr);
}
.palette button {
height: 18px;
align-self: center;
}
.palette .c-stripes { background: linear-gradient(#000 3px, #ddd 3px 4px, #00f 4px 7px, #0ff 7px 10px, #f0f 10px 14px, #ff0 14px 17px, #000 17px); }
.c-grey { background: #808080; }
.c-red { background: #f00; }
.c-magenta { background: #f0f; }
.c-brown { background: #af6247; }
.c-salmon { background: #e58a64; }
.c-maroon { background: #800000; }
.c-lime { background: #0f0; }
.c-green { background: #008000; }
.c-khaki { background: #c8c87c; }
.c-olive { background: #808000; }
.c-blue { background: #00f; }
.c-navy { background: #000080; }
.c-purple { background: #800080; }
.c-cyan { background: #0ff; }
.c-yellow { background: #ff0; }
.c-teal { background: #008080; }
.c-slate { background: #6464cc; }
.c-lilac { background: #b9b9f7; }
.c-umber { background: #5b4f3c; }
.c-gold { background: #c89600; }
.c-orange { background: #ff8000; }
.c-violet { background: #3b1463; }
.c-white { background: #fff; }

/* layer panel */
.panel {
flex: none;
width: 140px;
margin: 5px 0 2px -1px;
display: flex;
flex-direction: column;
border: 1px solid #a5aec1;
border-width: 0 0 1px 1px;
background: #fff;
overflow: hidden;
}
.panel-tabs {
flex: none;
display: flex;
height: 17px;
background: #d5dbec;
}
.panel-tabs button {
flex: none;
width: 26px;
padding-left: 2px;
border-top: 1px solid #aab3c8;
border-right: 1px solid #aab3c8;
border-radius: 0 10px 0 0;
}
.panel-tabs .active {
background: #f7f8fb;
}
.panel-tabs svg,
.panel-tools svg {
width: 14px;
height: 14px;
}
.panel-tools {
flex: none;
display: flex;
gap: 2px;
height: 16px;
padding: 1px;
background: #eff1f5;
border-bottom: 1px solid #c4c9d4;
}
.layers {
flex: none;
table-layout: fixed;
width: 150px;
border-collapse: collapse;
}
.layers th,
.layers td {
width: 13px;
height: 13px;
padding: 0;
text-align: left;
line-height: 12px;
border-bottom: 1px solid #f0f0f0;
white-space: nowrap;
overflow: hidden;
}
.layers th {
height: 18px;
font-weight: normal;
border-right: 1px solid #eaecef;
background: linear-gradient(#fff, #f4f5f7);
}
.layers .name {
width: 60px;
padding-left: 6px;
}
.layers th.name {
padding-left: 4px;
}
.layers .material {
width: 38px;
}
.layers th.material {
padding-left: 4px;
}
.layers .current {
font-weight: bold;
}
.layers svg {
width: 11px;
height: 11px;
}
.layer-color,
.layer-material {
display: block;
width: 9px;
height: 9px;
border: 1px solid #145a14;
background: #0f0;
}
.layer-material {
float: left;
margin: 1px 4px 0 0;
border-radius: 50%;
border-color: #333;
background: #0ff;
}
.hscroll {
display: flex;
align-items: center;
height: 13px;
margin-top: auto;
background: #ededed;
}
.hscroll svg {
width: 12px;
height: 12px;
}
.hscroll .end {
margin-left: auto;
}
.thumb {
width: 55px;
height: 11px;
margin-left: 2px;
border: 1px solid #979797;
background: repeating-linear-gradient(90deg, #555 0 1px, transparent 1px 3px) center / 7px 5px no-repeat, linear-gradient(#f6f6f6, #cfcfd1);
}

/* object snaps */
.osnap {
flex: none;
display: flex;
gap: 8px;
height: 16px;
padding: 5px 0 0 9px;
}
.osnap label {
flex: none;
display: flex;
align-items: center;
gap: 4px;
height: 11px;
line-height: 11px;
}
.osnap input {
appearance: none;
width: 9px;
height: 9px;
margin: 0;
border: 1px solid #999da5;
background: #f0f1f3;
}
.osnap input:checked {
background: #f6f7fa;
}
.osnap input:checked::after {
content: "";
display: block;
width: 3px;
height: 6px;
margin-left: 2px;
border: solid #1f3f94;
border-width: 0 2px 2px 0;
transform: rotate(35deg);
}
.osnap .wide {
width: 12px;
height: 12px;
margin-right: -3px;
border-radius: 2px;
background: linear-gradient(#fff, #dcdde0);
}
```
